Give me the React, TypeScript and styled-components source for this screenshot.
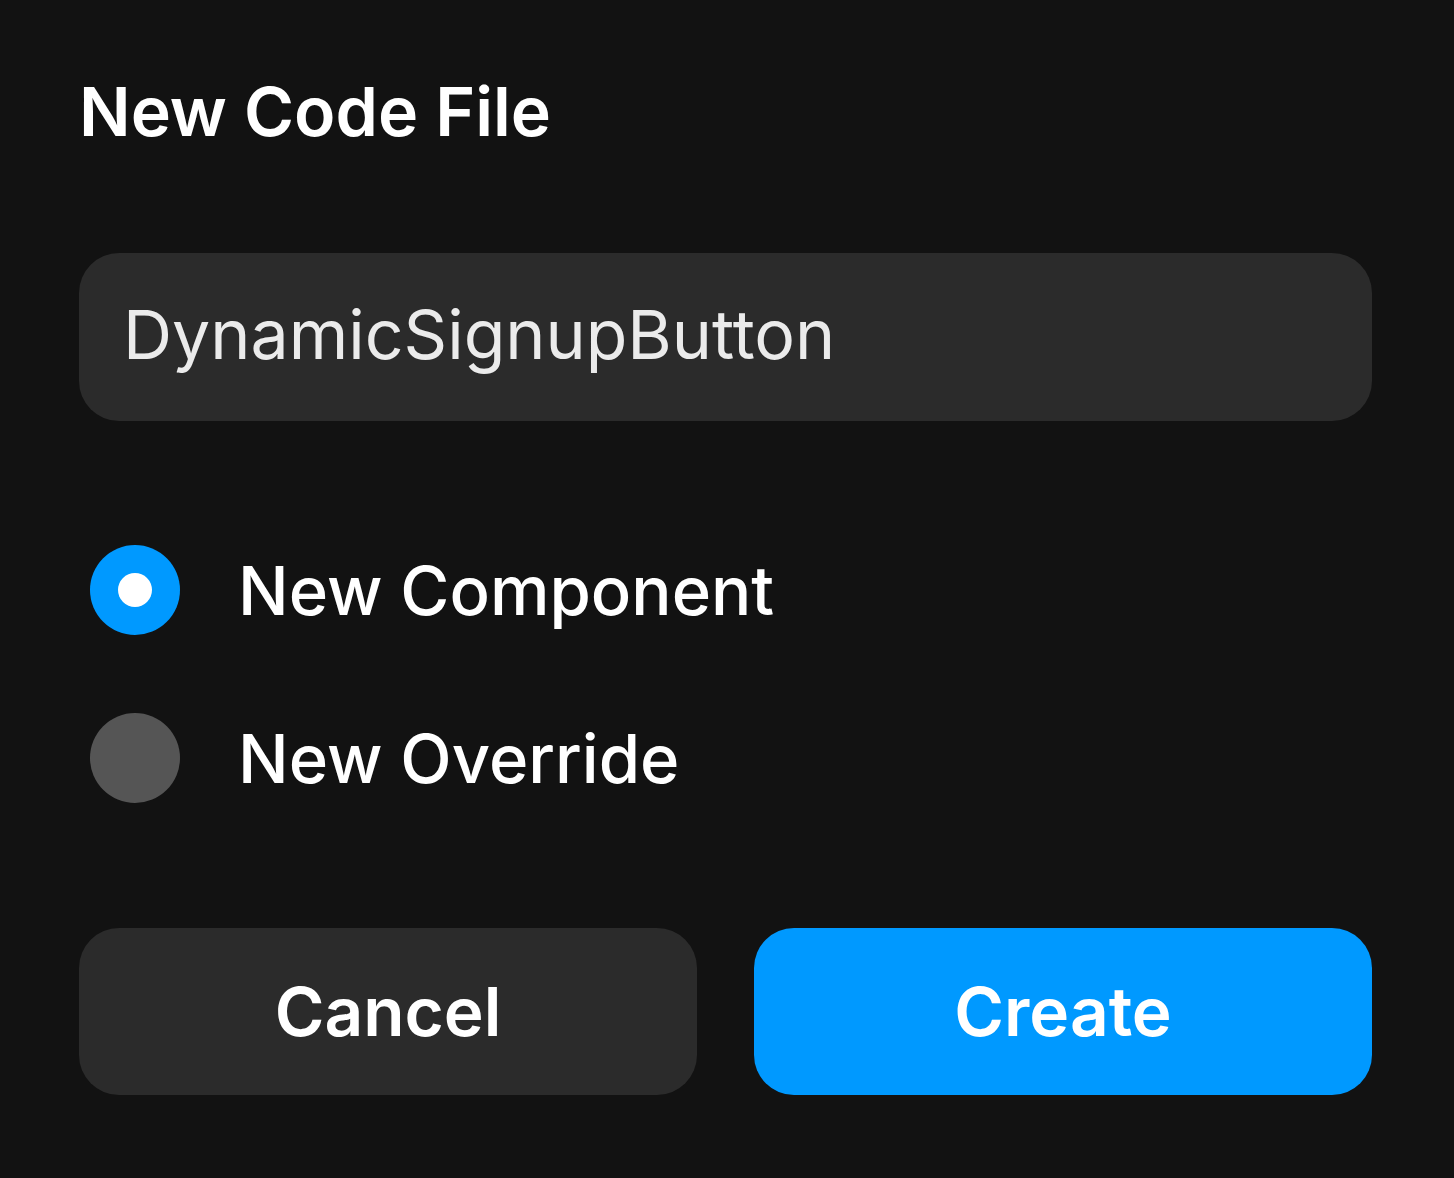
import React, { useState } from "react";
import styled, { createGlobalStyle } from "styled-components";

const Global = createGlobalStyle`
  html, body {
    margin: 0;
    padding: 0;
    background: #121212;
  }
  body {
    font-family: Inter, "Noto Sans", sans-serif;
    -webkit-font-smoothing: antialiased;
  }
`;

const Dialog = styled.div`
  width: 1454px;
  height: 1178px;
  box-sizing: border-box;
  padding: 77px 82px 0 79px;
  background: #121212;
  display: flex;
  flex-direction: column;
`;

const Title = styled.h1`
  margin: 0;
  font-size: 68px;
  line-height: 69px;
  font-weight: 600;
  color: #ffffff;
`;

const Field = styled.input`
  margin-top: 107px;
  height: 168px;
  box-sizing: border-box;
  border: none;
  outline: none;
  border-radius: 40px;
  background: #2b2b2b;
  padding: 0 44px 6px;
  font-family: Inter, "Noto Sans", sans-serif;
  font-size: 68px;
  font-weight: 400;
  color: #ebebeb;
`;

const Options = styled.div`
  margin-top: 124px;
  display: flex;
  flex-direction: column;
  gap: 78px;
`;

const OptionRow = styled.label`
  display: flex;
  align-items: center;
  gap: 58px;
  height: 90px;
  padding-left: 11px;
  cursor: pointer;
`;

const Radio = styled.span<{ $checked: boolean }>`
  width: 90px;
  height: 90px;
  border-radius: 50%;
  flex-shrink: 0;
  background: ${(p) => (p.$checked ? "#0099ff" : "#555555")};
  display: flex;
  align-items: center;
  justify-content: center;
  &::after {
    content: "";
    width: 34px;
    height: 34px;
    border-radius: 50%;
    background: #ffffff;
    display: ${(p) => (p.$checked ? "block" : "none")};
  }
`;

const OptionText = styled.span`
  font-size: 67px;
  line-height: 1;
  font-weight: 500;
  color: #ffffff;
`;

const Buttons = styled.div`
  margin-top: 125px;
  display: grid;
  grid-template-columns: 1fr 1fr;
  gap: 57px;
`;

const Button = styled.button<{ $primary?: boolean }>`
  height: 167px;
  border: none;
  border-radius: 40px;
  background: ${(p) => (p.$primary ? "#0099ff" : "#2b2b2b")};
  color: #ffffff;
  font-family: Inter, "Noto Sans", sans-serif;
  font-size: 67.5px;
  font-weight: 600;
  cursor: pointer;
`;

export default function App() {
  const [mode, setMode] = useState<"component" | "override">("component");
  return (
    <>
      <Global />
      <Dialog>
        <Title>New Code File</Title>
        <Field defaultValue="DynamicSignupButton" />
        <Options>
          <OptionRow onClick={() => setMode("component")}>
            <Radio $checked={mode === "component"} />
            <OptionText>New Component</OptionText>
          </OptionRow>
          <OptionRow onClick={() => setMode("override")}>
            <Radio $checked={mode === "override"} />
            <OptionText>New Override</OptionText>
          </OptionRow>
        </Options>
        <Buttons>
          <Button>Cancel</Button>
          <Button $primary>Create</Button>
        </Buttons>
      </Dialog>
    </>
  );
}
